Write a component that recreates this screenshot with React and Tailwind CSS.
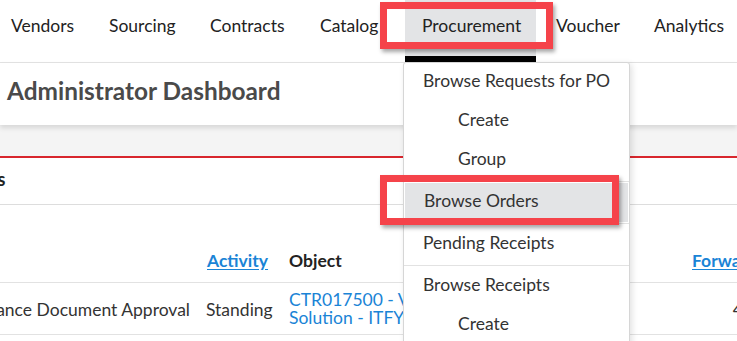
import React from 'react';

const navItems = [
  { label: 'Vendors', width: 'w-[98px]' },
  { label: 'Sourcing', width: 'w-[101px]' },
  { label: 'Contracts', width: 'w-[110px]' },
  { label: 'Catalog', width: 'w-[102px]' },
  { label: 'Procurement', width: 'w-[131px] mr-[3px]', active: true },
  { label: 'Voucher', width: 'w-[98px]' },
  { label: 'Analytics', width: 'w-[100px]' },
];

const menuGroups = [
  { label: 'Browse Requests for PO', children: ['Create', 'Group'] },
  { label: 'Browse Orders', active: true, children: [] },
  { label: 'Pending Receipts', children: [] },
  { label: 'Browse Receipts', children: ['Create'] },
];

const App = () => {
  return (
    <div className="relative w-[737px] h-[341px] overflow-hidden bg-white text-[#222] font-['Lato','Liberation_Sans',sans-serif]">
      {/* top nav */}
      <nav className="h-[63px] flex items-start border-b border-[#e3e3e3] -ml-[6px]">
        {navItems.map((item) => (
          <div
            key={item.label}
            className={`shrink-0 h-[62px] flex items-start pt-[13px] pl-[17px] text-[17.5px] whitespace-nowrap ${item.width} ${
              item.active ? 'bg-[#e3e4e6] border-b-[6px] border-black' : ''
            }`}
          >
            {item.label}
          </div>
        ))}
      </nav>

      {/* page header */}
      <div className="h-[62px] flex items-center pb-[6px] px-[7px] bg-white shadow-[0_3px_5px_rgba(0,0,0,0.12)] relative">
        <h1 className="text-[24.4px] font-bold text-[#4a4a4a]">Administrator Dashboard</h1>
      </div>
      <div className="h-[33px] bg-[#f4f4f4] border-b-2 border-[#d8262d]" />

      {/* tasks panel */}
      <div className="h-[47px] flex items-center pb-[3px] border-b border-[#dddddd] -ml-[38px]">
        <span className="text-[18px] font-bold text-[#222]">Tasks</span>
      </div>

      <div className="flex items-end h-[78px] border-b border-[#e2e2e2] pb-[8px] text-[17.5px]">
        <div className="shrink-0 w-[207px]" />
        <div className="shrink-0 w-[82px] font-bold text-[#1a84d6] underline underline-offset-2">Activity</div>
        <div className="shrink-0 w-[403px] font-bold text-[#222]">Object</div>
        <div className="shrink-0 font-bold text-[#1a84d6] underline underline-offset-2 whitespace-nowrap">Forward</div>
      </div>

      <div className="flex items-center h-[52px] border-b border-[#e2e2e2] text-[17.5px] text-[#333]">
        <div className="shrink-0 w-[197px] mt-[4px] flex justify-end overflow-hidden whitespace-nowrap pr-[7px]">
          Governance Document Approval
        </div>
        <div className="shrink-0 w-[9px]" />
        <div className="shrink-0 w-[83px] mt-[4px]">Standing</div>
        <div className="shrink-0 w-[403px] mt-[1px] leading-[18px] text-[#1a84d6] whitespace-nowrap">
          CTR017500 - Virtual Desktop Infrastructure
          <br />
          Solution - ITFY25
        </div>
        <div className="flex-1 mt-[4px] text-right whitespace-nowrap -mr-[6px]">4</div>
      </div>

      {/* procurement dropdown */}
      <div className="absolute left-[403px] top-[62px] w-[227px] h-[300px] bg-white border border-[#d6d6d6] rounded-[3px] shadow-[2px_2px_6px_rgba(0,0,0,0.12)] text-[17.5px] text-[#333]">
        {menuGroups.map((group, i) => (
          <div key={group.label}>
            {i > 0 && (
              <div className="h-[3px] flex items-center">
                <div className="w-full h-px bg-[#e2e2e2]" />
              </div>
            )}
            <div
              className={`h-[39px] flex items-center pb-[2px] pl-[19px] whitespace-nowrap ${
                group.active ? 'bg-[#e3e4e6] mx-px' : ''
              }`}
            >
              {group.label}
            </div>
            {group.children.map((child) => (
              <div key={child} className="h-[39px] flex items-center pb-[2px] pl-[54px]">
                {child}
              </div>
            ))}
          </div>
        ))}
      </div>

      {/* highlight annotations */}
      <div className="absolute left-[380px] top-[2px] w-[173px] h-[47px] border-[7px] border-[#f5434a] shadow-[2px_3px_4px_rgba(0,0,0,0.35)]" />
      <div className="absolute left-[380px] top-[175px] w-[239px] h-[50px] border-[7px] border-[#f5434a] shadow-[2px_3px_4px_rgba(0,0,0,0.35)]" />
    </div>
  );
};

export default App;
